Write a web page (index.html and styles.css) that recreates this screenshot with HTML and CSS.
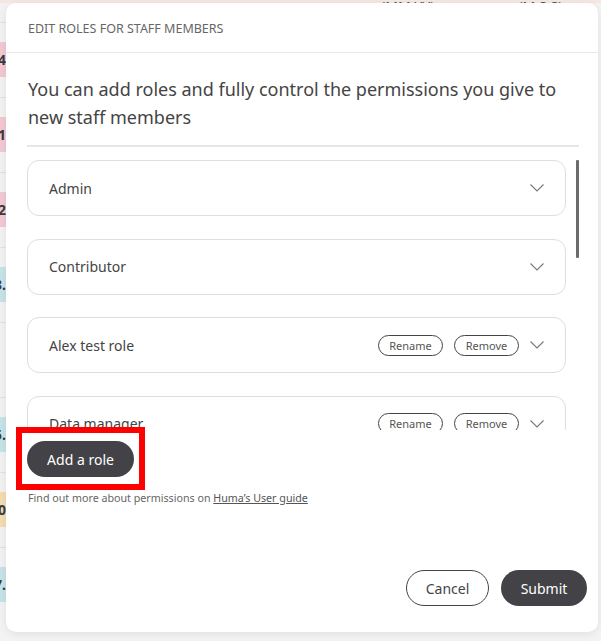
FILE: index.html
```html
<!DOCTYPE html>
<html>
<head>
<meta charset="utf-8">
<link rel="stylesheet" href="styles.css">
</head>
<body>
<div class="page">
  <div class="topbar">
    <span class="top-label one">(MM:YY)</span>
    <span class="top-label two">(M:S:S)</span>
  </div>
  <div class="side">
    <div class="row"><span class="cell pink">14</span></div>
    <div class="row"><span class="cell pink">11</span></div>
    <div class="row"><span class="cell pink">12</span></div>
    <div class="row"><span class="cell teal">3.</span></div>
    <div class="row"><span class="cell none"></span></div>
    <div class="row"><span class="cell teal">5.</span></div>
    <div class="row"><span class="cell yellow">10</span></div>
    <div class="row"><span class="cell teal">7.</span></div>
  </div>
</div>

<div class="modal">
  <div class="modal-header">EDIT ROLES FOR STAFF MEMBERS</div>
  <p class="intro">You can add roles and fully control the permissions you give to new staff members</p>
  <div class="divider"></div>
  <div class="scroll">
    <div class="list">
      <div class="card">
        <span class="card-title">Admin</span>
        <div class="card-actions">
          <svg class="chev" width="14" height="8" viewBox="0 0 14 8"><polyline points="0.5,0.5 7,7 13.5,0.5" fill="none" stroke="#777" stroke-width="1.1"/></svg>
        </div>
      </div>
      <div class="card">
        <span class="card-title">Contributor</span>
        <div class="card-actions">
          <svg class="chev" width="14" height="8" viewBox="0 0 14 8"><polyline points="0.5,0.5 7,7 13.5,0.5" fill="none" stroke="#777" stroke-width="1.1"/></svg>
        </div>
      </div>
      <div class="card">
        <span class="card-title">Alex test role</span>
        <div class="card-actions">
          <span class="pill">Rename</span>
          <span class="pill">Remove</span>
          <svg class="chev" width="14" height="8" viewBox="0 0 14 8"><polyline points="0.5,0.5 7,7 13.5,0.5" fill="none" stroke="#777" stroke-width="1.1"/></svg>
        </div>
      </div>
      <div class="card">
        <span class="card-title">Data manager</span>
        <div class="card-actions">
          <span class="pill">Rename</span>
          <span class="pill">Remove</span>
          <svg class="chev" width="14" height="8" viewBox="0 0 14 8"><polyline points="0.5,0.5 7,7 13.5,0.5" fill="none" stroke="#777" stroke-width="1.1"/></svg>
        </div>
      </div>
    </div>
    <div class="track"><div class="thumb"></div></div>
  </div>
  <div class="add-wrap">
    <button class="btn dark add">Add a role</button>
    <div class="highlight"></div>
  </div>
  <p class="note">Find out more about permissions on <a class="link">Huma’s User guide</a></p>
  <div class="footer">
    <button class="btn outline">Cancel</button>
    <button class="btn dark">Submit</button>
  </div>
</div>
</body>
</html>
```

FILE: styles.css
```css
* { box-sizing: border-box; }
html, body { margin: 0; padding: 0; }
body {
  width: 601px;
  height: 641px;
  overflow: hidden;
  background: #f3f3f3;
  font-family: "Noto Sans", "Open Sans", sans-serif;
  color: #444;
  position: relative;
}
.page { display: flex; flex-direction: column; }
.topbar {
  height: 3px;
  background: #f4e8e1;
  overflow: hidden;
  display: flex;
  align-items: flex-end;
}
.top-label {
  font-size: 14px;
  line-height: 14px;
  color: #555;
  margin-bottom: -11px;
}
.top-label.one { margin-left: 381px; }
.top-label.two { margin-left: 84px; }
.side {
  width: 6px;
  padding-top: 19px;
  background: #f2f2f2;
  display: flex;
  flex-direction: column;
  overflow: hidden;
}
.row {
  height: 75px;
  border-top: 1px solid #e2e2e2;
  padding-top: 19px;
  display: flex;
  justify-content: flex-end;
}
.cell {
  height: 35px;
  width: 6px;
  display: flex;
  align-items: center;
  justify-content: flex-end;
  font-size: 14px;
  font-weight: 700;
  color: #3a3a3a;
  white-space: nowrap;
  overflow: hidden;
}
.pink { background: #f2c9d3; }
.teal { background: #c6e3e7; }
.yellow { background: #f3dcb0; }
.none { background: transparent; }

.modal {
  position: absolute;
  left: 6px;
  top: 3px;
  width: 592px;
  height: 629px;
  background: #fff;
  border-radius: 10px;
  box-shadow: 0 2px 8px rgba(0,0,0,0.08);
  display: flex;
  flex-direction: column;
}
.modal-header {
  height: 50px;
  padding-left: 22px;
  padding-top: 1px;
  display: flex;
  align-items: center;
  font-size: 12.5px;
  color: #666;
  border-bottom: 1px solid #e9e9e9;
}
.intro {
  margin: 22px 19px 0 22px;
  font-size: 18px;
  line-height: 28px;
  color: #444;
}
.divider {
  margin: 14px 19px 0 21px;
  height: 2px;
  background: #e6e6e6;
}
.scroll {
  margin: 0 19px 0 21px;
  height: 283px;
  display: flex;
  gap: 10px;
}
.list {
  flex: 1;
  overflow: hidden;
  padding-top: 13px;
  display: flex;
  flex-direction: column;
  gap: 22.5px;
}
.card {
  flex: none;
  height: 56px;
  border: 1px solid #dedede;
  border-radius: 12px;
  display: flex;
  align-items: center;
  justify-content: space-between;
  padding: 0 21px;
}
.card-title { font-size: 14px; color: #444; }
.card-actions { display: flex; align-items: center; gap: 11px; }
.pill {
  width: 65px;
  height: 21px;
  border: 1px solid #444;
  border-radius: 11px;
  font-size: 11px;
  color: #555;
  display: flex;
  align-items: center;
  justify-content: center;
}
.chev { display: block; }
.track { width: 3px; padding-top: 13px; }
.thumb { width: 3px; height: 98px; background: #6b6b6e; border-radius: 1px; }

.add-wrap {
  position: relative;
  margin: 11px 0 0 21px;
  align-self: flex-start;
}
.btn {
  font-family: "Noto Sans", "Open Sans", sans-serif;
  font-size: 14px;
  height: 36px;
  border-radius: 18px;
  padding: 0;
  display: flex;
  align-items: center;
  justify-content: center;
  cursor: pointer;
}
.dark { background: #434347; color: #fff; border: none; }
.outline { background: #fff; color: #444; border: 1px solid #444; }
.add { width: 107px; }
.highlight {
  position: absolute;
  left: -11px;
  top: -14px;
  width: 129px;
  height: 63px;
  border: 6px solid #f00;
}
.note {
  margin: 13px 0 0 22px;
  font-size: 10.7px;
  line-height: 16px;
  color: #666;
}
.link { color: #555; text-decoration: underline; }
.footer {
  margin-top: auto;
  padding: 0 11px 26px 0;
  display: flex;
  justify-content: flex-end;
  gap: 12px;
}
.footer .outline { width: 83px; }
.footer .dark { width: 86px; }
```
